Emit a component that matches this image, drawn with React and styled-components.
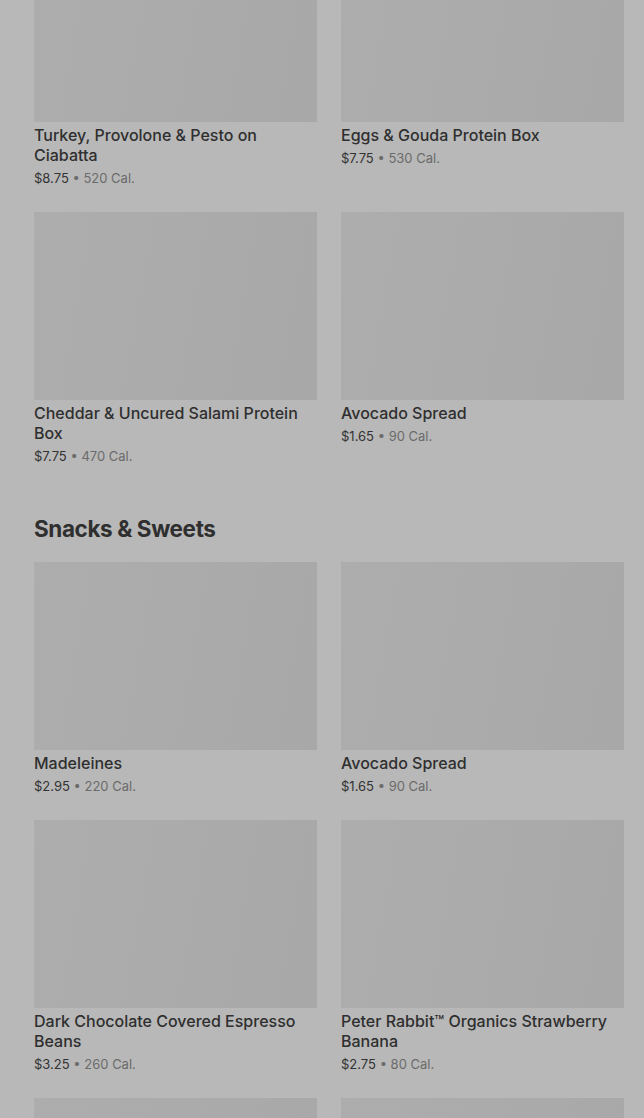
import styled, { createGlobalStyle } from "styled-components";

const GlobalStyle = createGlobalStyle`
  html, body {
    margin: 0;
    padding: 0;
    background: #b8b8b8;
    overflow: hidden;
  }
  body {
    font-family: Inter, "Noto Sans", "Liberation Sans", sans-serif;
  }
`;

const Page = styled.div`
  width: 644px;
  height: 1118px;
  overflow: hidden;
  background: #b8b8b8;
`;

const Content = styled.div`
  margin-top: -66px;
  padding: 0 20px 0 34px;
`;

const Section = styled.section`
  display: flex;
  flex-direction: column;
`;

const Heading = styled.h2`
  margin: 48px 0 18px;
  font-size: 22.5px;
  line-height: 30px;
  font-weight: 700;
  letter-spacing: -0.4px;
  color: #2f2f2f;
`;

const Grid = styled.div`
  display: grid;
  grid-template-columns: 283px 283px;
  column-gap: 24px;
  row-gap: 24px;
`;

const Card = styled.div`
  display: flex;
  flex-direction: column;
`;

const Thumb = styled.div`
  height: 188px;
  background: linear-gradient(100deg, #adadad 0%, #ababab 45%, #a8a8a8 100%);
`;

const Title = styled.div`
  margin-top: 3px;
  font-size: 16px;
  line-height: 20px;
  font-weight: 500;
  color: #2f2f2f;
`;

const Meta = styled.div`
  margin-top: 3px;
  font-size: 13px;
  line-height: 20px;
  color: #6b6b6b;
`;

const Price = styled.span`
  color: #333;
`;

const sections = [
  {
    items: [
      { name: "Turkey, Provolone & Pesto on Ciabatta", price: "$8.75", cal: "520 Cal." },
      { name: "Eggs & Gouda Protein Box", price: "$7.75", cal: "530 Cal." },
      { name: "Cheddar & Uncured Salami Protein Box", price: "$7.75", cal: "470 Cal." },
      { name: "Avocado Spread", price: "$1.65", cal: "90 Cal." },
    ],
  },
  {
    title: "Snacks & Sweets",
    items: [
      { name: "Madeleines", price: "$2.95", cal: "220 Cal." },
      { name: "Avocado Spread", price: "$1.65", cal: "90 Cal." },
      { name: "Dark Chocolate Covered Espresso Beans", price: "$3.25", cal: "260 Cal." },
      { name: "Peter Rabbit™ Organics Strawberry Banana", price: "$2.75", cal: "80 Cal." },
      {},
      {},
    ],
  },
];

export default function App() {
  return (
    <Page>
      <GlobalStyle />
      <Content>
        {sections.map((s, i) => (
          <Section key={i}>
            {s.title && <Heading>{s.title}</Heading>}
            <Grid>
              {s.items.map((it, j) => (
                <Card key={j}>
                  <Thumb />
                  {it.name && (
                    <>
                      <Title>{it.name}</Title>
                      <Meta>
                        <Price>{it.price}</Price> • {it.cal}
                      </Meta>
                    </>
                  )}
                </Card>
              ))}
            </Grid>
          </Section>
        ))}
      </Content>
    </Page>
  );
}
